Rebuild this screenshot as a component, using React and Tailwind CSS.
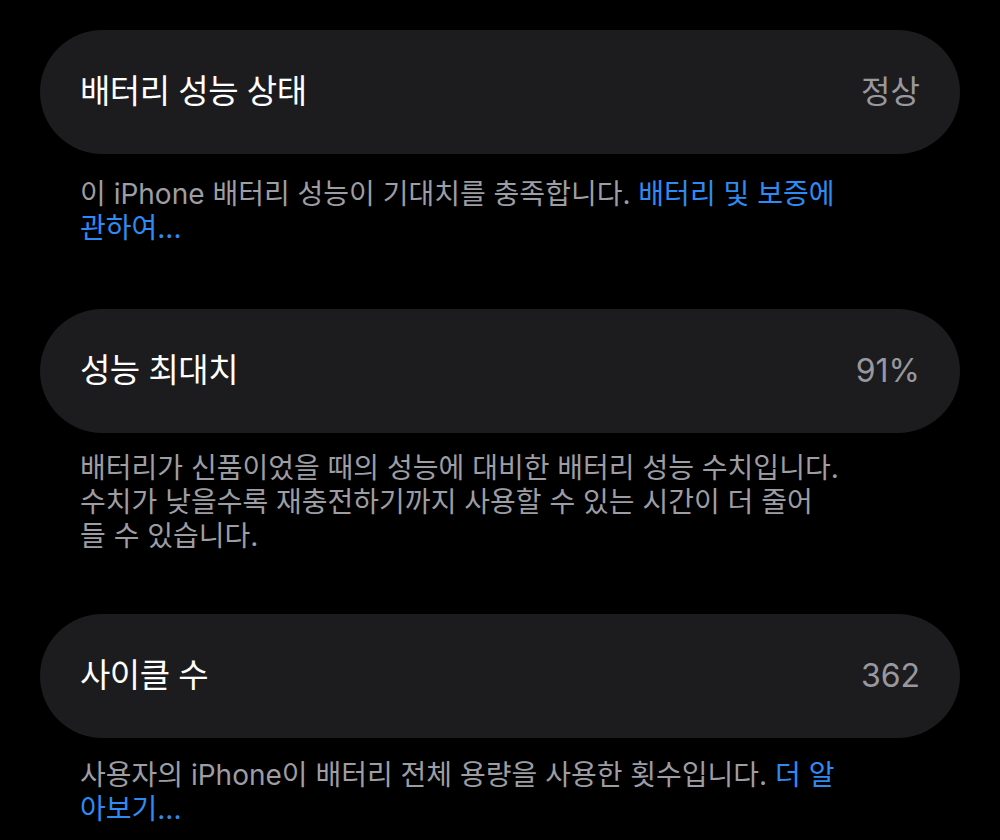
import React from 'react';

const FONT = 'font-["Inter","Noto_Sans_CJK_KR",sans-serif]';

function Row({ title, value }) {
  return (
    <div className="flex h-[124px] items-center justify-between rounded-full bg-[#1c1c1e] pl-10 pr-10">
      <span className="text-[33px] tracking-[-0.5px] text-white">{title}</span>
      <span className="text-[32px] text-[#98989e]">{value}</span>
    </div>
  );
}

function Note({ children, className = '' }) {
  return (
    <p className={`px-10 text-[28px] leading-[34px] text-[#9d9da3] ${className}`}>{children}</p>
  );
}

function Link({ children }) {
  return <span className="text-[#2f8bf4]">{children}</span>;
}

export default function App() {
  return (
    <div className={`${FONT} min-h-[840px] w-[1000px] overflow-hidden bg-black px-10 pt-[30px] antialiased`}>
      {/* Battery health */}
      <Row title="배터리 성능 상태" value="정상" />
      <Note className="mt-[23px]">
        이 iPhone 배터리 성능이 기대치를 충족합니다. <Link>배터리 및 보증에</Link>
        <br />
        <Link>관하여...</Link>
      </Note>

      {/* Maximum capacity */}
      <div className="mt-[64px]">
        <Row title="성능 최대치" value="91%" />
      </div>
      <Note className="mt-[18px]">
        배터리가 신품이었을 때의 성능에 대비한 배터리 성능 수치입니다.
        <br />
        수치가 낮을수록 재충전하기까지 사용할 수 있는 시간이 더 줄어
        <br />
        들 수 있습니다.
      </Note>

      {/* Cycle count */}
      <div className="mt-[61px]">
        <Row title="사이클 수" value="362" />
      </div>
      <Note className="mt-[20px]">
        사용자의 iPhone이 배터리 전체 용량을 사용한 횟수입니다. <Link>더 알</Link>
        <br />
        <Link>아보기...</Link>
      </Note>
    </div>
  );
}
